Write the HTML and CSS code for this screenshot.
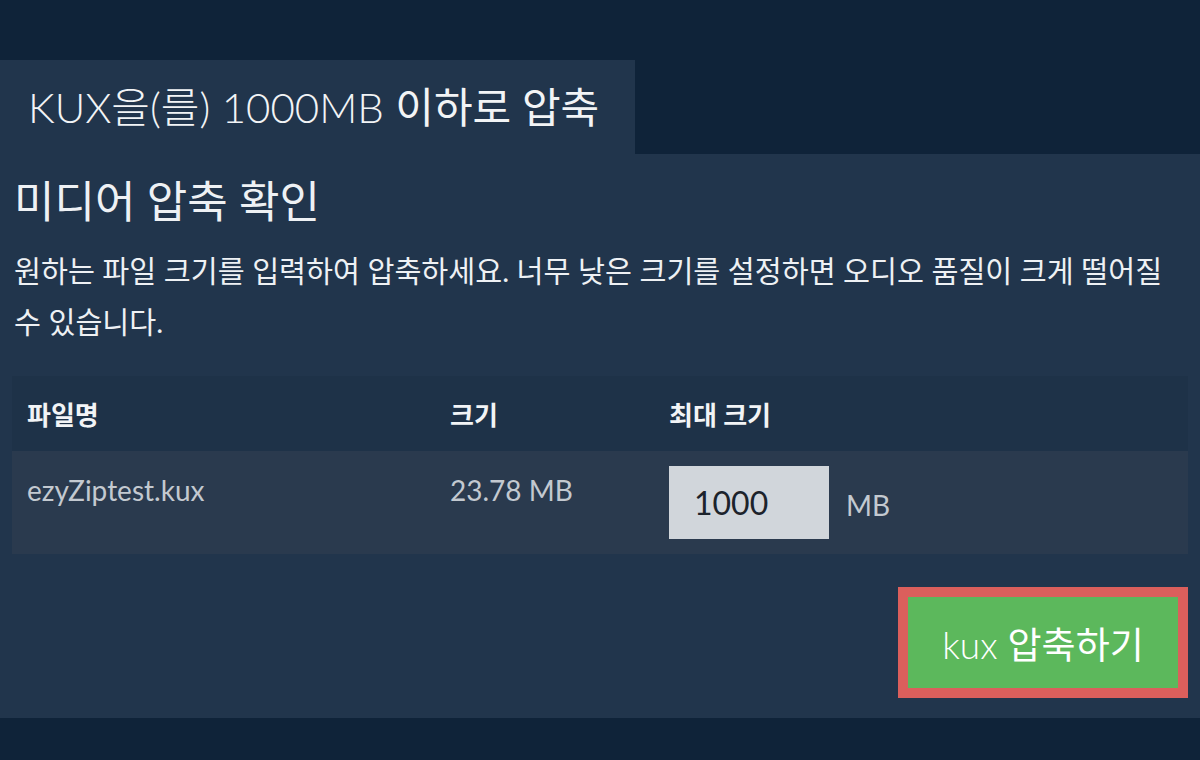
FILE: index.html
```html
<!DOCTYPE html>
<html lang="ko">
<head>
<meta charset="utf-8">
<title>KUX 압축</title>
<link rel="stylesheet" href="styles.css">
</head>
<body>
<div class="page">
  <div class="tab">KUX을(를) 1000MB <span class="tab-strong">이하로 압축</span></div>
  <section class="panel">
    <h1 class="title">미디어 압축 확인</h1>
    <p class="desc">원하는 파일 크기를 입력하여 압축하세요. 너무 낮은 크기를 설정하면 오디오 품질이 크게 떨어질 수 있습니다.</p>
    <table class="files">
      <thead>
        <tr>
          <th class="c-name">파일명</th>
          <th class="c-size">크기</th>
          <th class="c-max">최대 크기</th>
        </tr>
      </thead>
      <tbody>
        <tr>
          <td class="c-name">ezyZiptest.kux</td>
          <td class="c-size">23.78 MB</td>
          <td class="c-max">
            <div class="max-wrap">
              <input class="max-input" type="text" value="1000">
              <span class="unit">MB</span>
            </div>
          </td>
        </tr>
      </tbody>
    </table>
    <div class="actions">
      <button class="go" type="button">kux <span class="go-ko">압축하기</span></button>
    </div>
  </section>
</div>
</body>
</html>
```

FILE: styles.css
```css
html, body {
  margin: 0;
  padding: 0;
}
body {
  background: #0f2339;
  font-family: Lato, "Noto Sans CJK KR", sans-serif;
  color: #eef1f4;
}
.page {
  padding-top: 60px;
}
.tab {
  display: inline-block;
  height: 94px;
  line-height: 94px;
  padding: 0 36px 0 28px;
  background: #21354c;
  font-size: 42px;
  font-weight: 300;
  color: #f2f4f6;
  white-space: nowrap;
  vertical-align: top;
}
.tab-strong {
  font-weight: 400;
}
.panel {
  background: #21354c;
  height: 564px;
  box-sizing: border-box;
  padding: 19px 12px 20px 12px;
}
.title {
  margin: 0;
  font-size: 44px;
  font-weight: 400;
  line-height: 56px;
  color: #eef1f4;
  padding-left: 2px;
}
.desc {
  margin: 16px 0 0 0;
  font-size: 29.3px;
  line-height: 51px;
  color: #eef1f4;
  padding-left: 2px;
  word-break: keep-all;
}
.files {
  width: 100%;
  margin-top: 29px;
  border-collapse: collapse;
  table-layout: fixed;
}
.files th {
  background: #1e3248;
  height: 75px;
  padding: 0 15px;
  text-align: left;
  font-size: 26px;
  font-weight: 700;
  color: #f2f4f6;
  vertical-align: middle;
}
.files td {
  background: #2a3a4e;
  padding: 22px 15px 0 15px;
  height: 103px;
  box-sizing: border-box;
  vertical-align: top;
  font-size: 28px;
  line-height: 34px;
  color: #c3c9d0;
}
.c-name { width: 393px; }
.c-size { width: 189px; }
.files td.c-max {
  padding-top: 15px;
  padding-bottom: 15px;
}
.max-wrap {
  display: flex;
  align-items: center;
  gap: 17px;
}
.max-input {
  width: 160px;
  height: 73px;
  box-sizing: border-box;
  border: none;
  background: #d1d6db;
  padding: 0 0 0 25px;
  font-family: Lato, "Noto Sans CJK KR", sans-serif;
  font-size: 32px;
  color: #1c232b;
  outline: none;
  margin: 0;
}
.unit {
  font-size: 28px;
  color: #c3c9d0;
  padding-top: 4px;
}
.actions {
  display: flex;
  justify-content: flex-end;
  margin-top: 33px;
}
.go {
  width: 290px;
  height: 111px;
  box-sizing: border-box;
  border: 10px solid #db5f5c;
  background: #5cb85c;
  color: #ffffff;
  font-family: Lato, "Noto Sans CJK KR", sans-serif;
  font-size: 37px;
  font-weight: 300;
  padding: 0;
  cursor: pointer;
}
.go-ko {
  font-weight: 400;
}
```
